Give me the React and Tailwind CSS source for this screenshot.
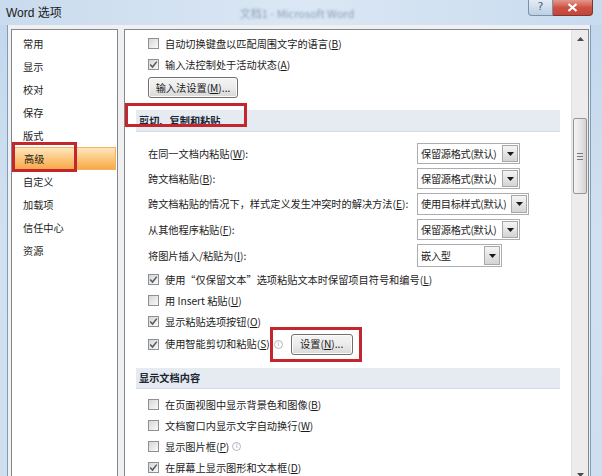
import React from "react"

function Acc({ text, k, tail = "" }) {
  return (
    <span>
      {text}(<span className="underline">{k}</span>){tail}
    </span>
  )
}

function Box({ checked }) {
  return (
    <span className="w-[11px] h-[11px] shrink-0 border border-[#8e8f8f] bg-gradient-to-br from-[#d6d6d6] to-[#fafafa] flex items-center justify-center">
      {checked && (
        <svg width="9" height="9" viewBox="0 0 9 9">
          <path d="M1.2 4.6 L3.5 7 L7.8 1.6" fill="none" stroke="#515a66" strokeWidth="1.5" />
        </svg>
      )}
    </span>
  )
}

function Info() {
  return (
    <span className="w-[9px] h-[9px] rounded-full border border-[#b5b5b5] text-[#a0a0a0] text-[7px] leading-none flex items-center justify-center font-['DejaVu_Sans',sans-serif] shrink-0">
      i
    </span>
  )
}

function CheckRow({ checked, children, h = "h-[21px]" }) {
  return (
    <div className={"flex items-center pl-[12px] " + h}>
      <Box checked={checked} />
      <span className="ml-[6px] whitespace-nowrap">{children}</span>
    </div>
  )
}

function Btn({ children, w }) {
  return (
    <div className={"h-[21px] rounded-[3px] border border-[#707070] bg-gradient-to-b from-[#f4f4f4] via-[#ebebeb] to-[#d8d8d8] flex items-center justify-center whitespace-nowrap shadow-[inset_0_0_0_1px_#fcfcfc] " + w}>
      {children}
    </div>
  )
}

function Select({ value, w, h = "h-[21px]" }) {
  return (
    <div className={"flex border border-[#abadb3] bg-white " + w + " " + h}>
      <span className="flex-1 pl-[3px] flex items-center whitespace-nowrap overflow-hidden tracking-[-0.3px]">{value}</span>
      <span className="w-[16px] shrink-0 my-[1px] mr-[1px] border border-[#a8a8a8] bg-gradient-to-b from-[#f5f5f5] to-[#d4d4d4] flex items-center justify-center">
        <svg width="7" height="4" viewBox="0 0 7 4">
          <path d="M0 0 H7 L3.5 4 Z" fill="#1a1a1a" />
        </svg>
      </span>
    </div>
  )
}

function SelectRow({ label, value, w, h = "h-[25px]", sh }) {
  return (
    <div className={"flex items-center pl-[12px] " + h}>
      <span className="w-[269px] shrink-0 whitespace-nowrap">{label}</span>
      <Select value={value} w={w} h={sh} />
    </div>
  )
}

function Header({ children, className }) {
  return (
    <div className={"bg-[#e5ebf0] border-b border-[#d3dbe3] flex items-center pl-[3px] font-bold text-[#1c2533] " + className}>
      {children}
    </div>
  )
}

const nav = ["常用", "显示", "校对", "保存", "版式", "高级", "自定义", "加载项", "信任中心", "资源"]

export default function App() {
  return (
    <div className="relative w-[602px] h-[476px] overflow-hidden bg-gradient-to-b from-[#c2d6ec] via-[#d2e1f1] to-[#cfdff0] font-['Noto_Sans_CJK_SC',sans-serif] text-[10.2px] text-[#1b1b1b]">
      {/* title bar */}
      <div className="h-[25px] flex items-start bg-gradient-to-r from-[#c9dbee] via-[#dbe7f4] to-[#c8dbef]">
        <span className="pl-[6px] pt-[4px] text-[12px] text-[#1a1a1a] font-['Liberation_Sans','Noto_Sans_CJK_SC',sans-serif]">Word 选项</span>
        <span className="ml-[178px] pt-[5px] text-[11px] text-[#8ea2b8] blur-[1.3px] whitespace-nowrap">文档1 - Microsoft Word</span>
        <div className="ml-auto mr-[9px] flex">
          <div className="w-[25px] h-[16px] rounded-bl-[4px] border border-t-0 border-[#7c91a8] bg-gradient-to-b from-[#e3ecf5] to-[#bccfe3] flex items-center justify-center text-[11px] text-[#4f5f72] font-['DejaVu_Sans',sans-serif]">
            ?
          </div>
          <div className="w-[40px] h-[16px] rounded-br-[4px] border border-t-0 border-l-0 border-[#7d3530] bg-gradient-to-b from-[#e2978e] via-[#cf5143] to-[#c4443a] flex items-center justify-center">
            <svg width="11" height="9" viewBox="0 0 11 9">
              <path d="M1.5 1 L9.5 8 M9.5 1 L1.5 8" stroke="#ffffff" strokeWidth="2.2" />
            </svg>
          </div>
        </div>
      </div>

      {/* body */}
      <div className="h-[459px] ml-[7px] mr-[11px] border-x border-[#7f9db9] bg-[#f0f0f0] pl-[3px] pr-[1px] pt-[4px] flex">
        {/* sidebar */}
        <div className="w-[107px] shrink-0 border border-[#828790] bg-white pt-[2px]">
          {nav.map(n =>
            n === "高级" ? (
              <div key={n} className="h-[23px] mx-[1px] pl-[10px] flex items-center bg-gradient-to-b from-[#fde6be] via-[#fcc77c] to-[#f9a84a] border border-[#f2b25e]">
                {n}
              </div>
            ) : (
              <div key={n} className="h-[23px] pl-[11px] flex items-center">
                {n}
              </div>
            )
          )}
        </div>

        {/* content */}
        <div className="flex-1 ml-[6px] border border-[#828790] bg-white flex min-w-0">
          <div className="flex-1 min-w-0 overflow-hidden px-[11px] pt-[3px]">
            <CheckRow checked={false}><Acc text="自动切换键盘以匹配周围文字的语言" k="B" /></CheckRow>
            <CheckRow checked><Acc text="输入法控制处于活动状态" k="A" /></CheckRow>
            <div className="pl-[12px] mt-[2px]">
              <Btn w="w-[90px]"><Acc text="输入法设置" k="M" tail="..." /></Btn>
            </div>

            <Header className="h-[22px] mt-[12px]">剪切、复制和粘贴</Header>

            <div className="mt-[9px]">
              <SelectRow label={<Acc text="在同一文档内粘贴" k="W" tail=":" />} value="保留源格式(默认)" w="w-[103px]" />
              <SelectRow label={<Acc text="跨文档粘贴" k="B" tail=":" />} value="保留源格式(默认)" w="w-[103px]" />
              <SelectRow label={<Acc text="跨文档粘贴的情况下，样式定义发生冲突时的解决方法" k="E" tail=":" />} value="使用目标样式(默认)" w="w-[112px]" h="h-[26px]" sh="h-[22px]" />
              <SelectRow label={<Acc text="从其他程序粘贴" k="F" tail=":" />} value="保留源格式(默认)" w="w-[103px]" />
              <SelectRow label={<Acc text="将图片插入/粘贴为" k="I" tail=":" />} value="嵌入型" w="w-[85px]" h="h-[27px]" sh="h-[23px]" />
            </div>

            <CheckRow checked><Acc text="使用“仅保留文本”选项粘贴文本时保留项目符号和编号" k="L" /></CheckRow>
            <CheckRow checked={false}><Acc text="用 Insert 粘贴" k="U" /></CheckRow>
            <CheckRow checked><Acc text="显示粘贴选项按钮" k="O" /></CheckRow>
            <div className="flex items-center pl-[12px] h-[24px]">
              <Box checked />
              <span className="ml-[6px] whitespace-nowrap"><Acc text="使用智能剪切和粘贴" k="S" /></span>
              <span className="ml-[4px]"><Info /></span>
              <span className="ml-[8px]"><Btn w="w-[62px]"><Acc text="设置" k="N" tail="..." /></Btn></span>
            </div>

            <Header className="h-[21px] mt-[12px]">显示文档内容</Header>

            <div className="mt-[5px]">
              <CheckRow checked={false}><Acc text="在页面视图中显示背景色和图像" k="B" /></CheckRow>
              <CheckRow checked={false}><Acc text="文档窗口内显示文字自动换行" k="W" /></CheckRow>
              <div className="flex items-center pl-[12px] h-[21px]">
                <Box checked={false} />
                <span className="ml-[6px] whitespace-nowrap"><Acc text="显示图片框" k="P" /></span>
                <span className="ml-[3px]"><Info /></span>
              </div>
              <CheckRow checked><Acc text="在屏幕上显示图形和文本框" k="D" /></CheckRow>
            </div>
          </div>

          {/* scrollbar */}
          <div className="w-[17px] shrink-0 bg-[#ececec] border-l border-[#e2e2e2] flex flex-col">
            <div className="h-[17px] flex items-center justify-center">
              <svg width="7" height="4" viewBox="0 0 7 4"><path d="M0 4 H7 L3.5 0 Z" fill="#4a4a4a" /></svg>
            </div>
            <div className="mt-[71px] mx-[1px] h-[76px] rounded-[2px] border border-[#959595] bg-gradient-to-r from-[#f4f4f4] via-[#e6e6e6] to-[#d3d3d3] flex flex-col items-center justify-center gap-[2px]">
              <span className="w-[6px] h-px bg-[#7a7a7a]" />
              <span className="w-[6px] h-px bg-[#7a7a7a]" />
              <span className="w-[6px] h-px bg-[#7a7a7a]" />
            </div>
            <div className="flex-1" />
            <div className="h-[17px] flex items-center justify-center">
              <svg width="7" height="4" viewBox="0 0 7 4"><path d="M0 0 H7 L3.5 4 Z" fill="#4a4a4a" /></svg>
            </div>
          </div>
        </div>
      </div>

      {/* red annotation boxes */}
      <div className="absolute left-[12px] top-[142px] w-[65px] h-[30px] border-[3px] border-[#c3262c]" />
      <div className="absolute left-[125px] top-[103px] w-[122px] h-[24px] border-[3px] border-[#c3262c]" />
      <div className="absolute left-[270px] top-[327px] w-[92px] h-[35px] border-[3px] border-[#c3262c]" />
    </div>
  )
}
